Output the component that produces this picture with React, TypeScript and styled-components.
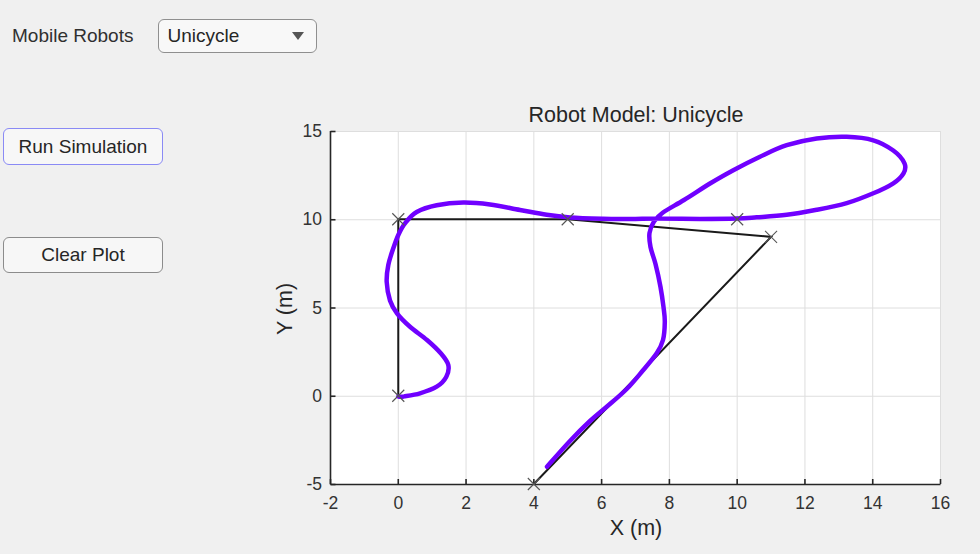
import React from "react";
import styled, { createGlobalStyle } from "styled-components";

const GlobalStyle = createGlobalStyle`
  html, body {
    margin: 0;
    padding: 0;
    background: #f0f0f0;
  }
  body {
    font-family: "Liberation Sans", Arial, sans-serif;
    color: #262626;
  }
`;

const Page = styled.div`
  width: 980px;
  height: 554px;
  overflow: hidden;
  display: flex;
  flex-direction: column;
  background: #f0f0f0;
`;

const TopBar = styled.div`
  display: flex;
  align-items: center;
  gap: 25px;
  padding: 19px 0 0 12px;
  height: 34px;
`;

const FieldLabel = styled.span`
  font-size: 19px;
  color: #303030;
`;

const Dropdown = styled.div`
  width: 159px;
  height: 34px;
  box-sizing: border-box;
  border: 1px solid #8f8f8f;
  border-radius: 6px;
  background: #f8f8f8;
  display: flex;
  align-items: center;
  justify-content: space-between;
  padding: 0 12px 0 8px;
  font-size: 19px;
  color: #262626;
`;

const Caret = styled.span`
  width: 0;
  height: 0;
  border-left: 6px solid transparent;
  border-right: 6px solid transparent;
  border-top: 8px solid #555;
`;

const Body = styled.div`
  display: flex;
  flex: 1;
`;

const SideColumn = styled.div`
  width: 267px;
  padding: 75px 0 0 3px;
  display: flex;
  flex-direction: column;
  gap: 72px;
`;

const ActionButton = styled.button<{ $focused?: boolean }>`
  width: 160px;
  height: ${({ $focused }) => ($focused ? "37px" : "36px")};
  box-sizing: border-box;
  border: 1px solid ${({ $focused }) => ($focused ? "#8a8af5" : "#8c8c8c")};
  border-radius: 6px;
  background: #f7f7f7;
  font-family: "Liberation Sans", Arial, sans-serif;
  font-size: 19px;
  color: #262626;
  padding: 0;
  cursor: pointer;
`;

const ChartSvg = styled.svg`
  margin-top: 47px;
  display: block;
`;

const TickLabel = styled.text`
  font-family: "Liberation Sans", Arial, sans-serif;
  font-size: 17.5px;
  fill: #333;
`;

const AxisTitle = styled.text`
  font-family: "Liberation Sans", Arial, sans-serif;
  font-size: 21.5px;
  fill: #262626;
`;

// data -> page pixel coordinates
const X0 = 330.5;
const X1 = 940.5;
const Y0 = 484;
const Y1 = 131;
const px = (v: number) => X0 + ((v + 2) * (X1 - X0)) / 18;
const py = (v: number) => Y0 - ((v + 5) * (Y0 - Y1)) / 20;

const xTicks = [-2, 0, 2, 4, 6, 8, 10, 12, 14, 16];
const yTicks = [-5, 0, 5, 10, 15];

const reference: [number, number][] = [
  [0, 0],
  [0, 10],
  [5, 10],
  [11, 9],
  [4, -5],
];

const waypoints: [number, number][] = [
  [0, 0],
  [0, 10],
  [5, 10],
  [10, 10],
  [11, 9],
  [4, -5],
];

// traced robot path (page pixels)
const trajectory: [number, number][] = [
  [398.3, 396.6], [404, 396.4], [420, 393.3], [436.7, 386.7], [446.2, 377],
  [448.3, 365], [441, 353.5], [427, 340], [410, 326.7], [397, 313.3],
  [390, 300.5], [386.7, 282], [388.3, 265], [393.3, 248.3], [398.3, 235],
  [405, 223.3], [416.7, 212], [436.7, 205.3], [463.3, 202.6], [490, 204.5],
  [520, 210], [546.7, 214.8], [570, 217.4], [603, 218.8], [630, 219],
  [658, 218.6], [700, 218.9], [736.7, 218.5], [756.7, 217.3], [786.7, 214.8],
  [816.7, 209.8], [846.7, 203.2], [873.3, 193.3], [893.3, 183.3], [903.5, 173.3],
  [904.5, 163.3], [893.3, 150.5], [873.3, 140.3], [846.7, 136.8], [816.7, 138.5],
  [786.7, 145.2], [760, 156.7], [733.3, 170.2], [710, 183.5], [684, 200],
  [663, 212.5], [654, 221.5], [649.5, 233], [650.5, 247], [655.5, 264],
  [660.5, 287], [663.5, 307], [664.8, 322], [663, 340], [656.7, 353.3],
  [643.3, 370], [626.7, 389], [607, 406.5], [590, 421], [570, 441],
  [547, 466.7],
];

const smoothPath = (pts: [number, number][]) => {
  let d = `M${pts[0][0]},${pts[0][1]}`;
  for (let i = 0; i < pts.length - 1; i++) {
    const p0 = pts[i - 1] || pts[i];
    const p1 = pts[i];
    const p2 = pts[i + 1];
    const p3 = pts[i + 2] || p2;
    const c1x = p1[0] + (p2[0] - p0[0]) / 6;
    const c1y = p1[1] + (p2[1] - p0[1]) / 6;
    const c2x = p2[0] - (p3[0] - p1[0]) / 6;
    const c2y = p2[1] - (p3[1] - p1[1]) / 6;
    d += ` C${c1x.toFixed(1)},${c1y.toFixed(1)} ${c2x.toFixed(1)},${c2y.toFixed(1)} ${p2[0]},${p2[1]}`;
  }
  return d;
};

const RobotPlot: React.FC = () => (
  <ChartSvg width={710} height={454} viewBox="270 100 710 454">
    <rect x={X0} y={Y1} width={X1 - X0} height={Y0 - Y1} fill="#fff" />
    {/* grid */}
    <g stroke="#dedede" strokeWidth={1}>
      {xTicks.map((t) => (
        <line key={`gx${t}`} x1={px(t)} x2={px(t)} y1={Y1} y2={Y0} />
      ))}
      {yTicks.map((t) => (
        <line key={`gy${t}`} x1={X0} x2={X1} y1={py(t) + 0.5} y2={py(t) + 0.5} />
      ))}
    </g>
    {/* axes */}
    <g stroke="#262626" strokeWidth={1.6}>
      <line x1={X0} x2={X0} y1={Y1} y2={Y0 + 0.5} />
      <line x1={X0} x2={X1} y1={Y0 + 0.5} y2={Y0 + 0.5} />
      {xTicks.map((t) => (
        <line key={`tx${t}`} x1={px(t)} x2={px(t)} y1={Y0} y2={Y0 - 5} />
      ))}
      {yTicks.map((t) => (
        <line key={`ty${t}`} x1={X0} x2={X0 + 5} y1={py(t) + 0.5} y2={py(t) + 0.5} />
      ))}
    </g>
    {xTicks.map((t) => (
      <TickLabel key={`lx${t}`} x={px(t)} y={509} textAnchor="middle">
        {t}
      </TickLabel>
    ))}
    {yTicks.map((t) => (
      <TickLabel key={`ly${t}`} x={322} y={py(t) + 6} textAnchor="end">
        {t}
      </TickLabel>
    ))}
    <AxisTitle x={636} y={535} textAnchor="middle">
      X (m)
    </AxisTitle>
    <AxisTitle
      x={0}
      y={0}
      textAnchor="middle"
      transform="translate(292 309) rotate(-90)"
    >
      Y (m)
    </AxisTitle>
    <AxisTitle x={636} y={122} textAnchor="middle">
      Robot Model: Unicycle
    </AxisTitle>
    {/* reference path */}
    <polyline
      points={reference.map(([a, b]) => `${px(a)},${py(b)}`).join(" ")}
      fill="none"
      stroke="#1a1a1a"
      strokeWidth={2}
    />
    {/* robot trajectory */}
    <path
      d={smoothPath(trajectory)}
      fill="none"
      stroke="#7000ff"
      strokeWidth={4.5}
      strokeLinecap="round"
      strokeLinejoin="round"
    />
    {/* waypoint markers */}
    <g stroke="#555" strokeWidth={1.1}>
      {waypoints.map(([a, b]) => (
        <g key={`w${a}_${b}`}>
          <line x1={px(a) - 6} y1={py(b) - 6} x2={px(a) + 6} y2={py(b) + 6} />
          <line x1={px(a) - 6} y1={py(b) + 6} x2={px(a) + 6} y2={py(b) - 6} />
        </g>
      ))}
    </g>
  </ChartSvg>
);

export default function App() {
  return (
    <Page>
      <GlobalStyle />
      <TopBar>
        <FieldLabel>Mobile Robots</FieldLabel>
        <Dropdown>
          <span>Unicycle</span>
          <Caret />
        </Dropdown>
      </TopBar>
      <Body>
        <SideColumn>
          <ActionButton $focused>Run Simulation</ActionButton>
          <ActionButton>Clear Plot</ActionButton>
        </SideColumn>
        <RobotPlot />
      </Body>
    </Page>
  );
}
